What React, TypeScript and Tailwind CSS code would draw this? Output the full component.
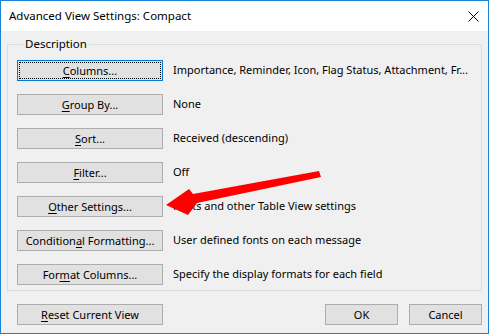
import React from "react";

interface Row {
  label: string;
  key: string;
  desc: string;
  isDefault?: boolean;
}

const rows: Row[] = [
  { label: "Columns...", key: "C", desc: "Importance, Reminder, Icon, Flag Status, Attachment, Fr...", isDefault: true },
  { label: "Group By...", key: "G", desc: "None" },
  { label: "Sort...", key: "S", desc: "Received (descending)" },
  { label: "Filter...", key: "F", desc: "Off" },
  { label: "Other Settings...", key: "O", desc: "Fonts and other Table View settings" },
  { label: "Conditional Formatting...", key: "a", desc: "User defined fonts on each message" },
  { label: "Format Columns...", key: "m", desc: "Specify the display formats for each field" },
];

// underline the access key letter, like a Win32 mnemonic
function Mnemonic({ text, letter }: { text: string; letter: string }) {
  const i = text.indexOf(letter);
  if (i < 0) return <>{text}</>;
  return (
    <>
      {text.slice(0, i)}
      <span className="underline underline-offset-2">{text[i]}</span>
      {text.slice(i + 1)}
    </>
  );
}

function WinButton({
  children,
  className = "",
  isDefault = false,
}: {
  children: React.ReactNode;
  className?: string;
  isDefault?: boolean;
}) {
  return (
    <button
      className={
        "flex h-[21px] shrink-0 items-center justify-center bg-[#e1e1e1] text-[11px] leading-none text-black " +
        (isDefault
          ? "border border-[#0078d7] outline-1 outline-dotted outline-black -outline-offset-3 "
          : "border border-[#adadad] ") +
        className
      }
    >
      {children}
    </button>
  );
}

export default function App() {
  return (
    <div className="relative flex h-[334px] w-[489px] flex-col border border-[#1883d7] bg-[#f0f0f0] font-['Noto_Sans',sans-serif] text-black">
      <div className="flex h-[30px] shrink-0 items-center justify-between bg-white pl-[8px] pr-[9px]">
        <span className="text-[11.5px]">Advanced View Settings: Compact</span>
        <svg width="11" height="11" viewBox="0 0 11 11">
          <path d="M0.5 0.5 L10.5 10.5 M10.5 0.5 L0.5 10.5" stroke="#000" strokeWidth="1" />
        </svg>
      </div>

      <div className="flex flex-1 flex-col px-[6px]">
        <fieldset className="mt-[5px] border border-[#dcdcdc] pb-[5px] pl-[9px] pr-[9px] pt-[8px]">
          <legend className="ml-[6px] px-[2px] text-[11.5px] leading-[16px]">Description</legend>
          <div className="flex flex-col gap-[13px]">
            {rows.map((r) => (
              <div key={r.label} className="flex items-center gap-[10px]">
                <WinButton className="w-[146px]" isDefault={r.isDefault}>
                  <Mnemonic text={r.label} letter={r.key} />
                </WinButton>
                <span className="whitespace-nowrap text-[11px]">{r.desc}</span>
              </div>
            ))}
          </div>
        </fieldset>

        <div className="mt-[13px] flex items-center pl-[10px]">
          <WinButton className="w-[146px]">
            <Mnemonic text="Reset Current View" letter="R" />
          </WinButton>
          <div className="flex-1" />
          <div className="flex gap-[11px]">
            <WinButton className="w-[73px]">OK</WinButton>
            <WinButton className="w-[73px]">Cancel</WinButton>
          </div>
        </div>
      </div>

      {/* red callout arrow lying over the dialog */}
      <svg className="absolute left-[160px] top-[162px]" width="165" height="58" viewBox="160 162 165 58">
        <polygon
          points="165,204 188,188 192,193 318,170 320,176 196,202 187,214"
          fill="#f00"
        />
      </svg>
    </div>
  );
}
